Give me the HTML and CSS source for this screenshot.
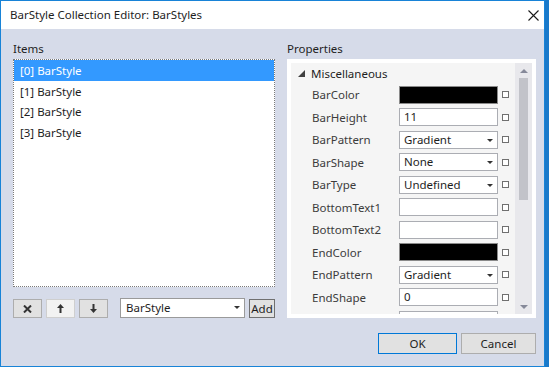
FILE: index.html
```html
<!DOCTYPE html>
<html>
<head>
    <title>BarStyle Collection Editor</title>
    <link rel="stylesheet" href="styles.css">
</head>
<body>

<div class="window">
    <div class="titlebar">
        <span class="title">BarStyle Collection Editor: BarStyles</span>
        <svg class="close" width="11" height="11" viewBox="0 0 11 11">
            <path d="M0.5 0.5 L10.5 10.5 M10.5 0.5 L0.5 10.5" stroke="#1a1a1a" stroke-width="1.1" fill="none"/>
        </svg>
    </div>

    <div class="content">
        <div class="panes">
            <div class="left">
                <div class="label">Items</div>
                <div class="listbox">
                    <div class="item selected">[0] BarStyle</div>
                    <div class="item">[1] BarStyle</div>
                    <div class="item">[2] BarStyle</div>
                    <div class="item">[3] BarStyle</div>
                </div>
                <div class="toolbar">
                    <button class="tool">
                        <svg width="9" height="8" viewBox="0 0 9 8"><path d="M1 0.5 L8 7.5 M8 0.5 L1 7.5" stroke="#333" stroke-width="2"/></svg>
                    </button>
                    <button class="tool light">
                        <svg width="7" height="9" viewBox="0 0 7 9"><path d="M3.5 0 L7 4 L4.5 4 L4.5 9 L2.5 9 L2.5 4 L0 4 Z" fill="#333"/></svg>
                    </button>
                    <button class="tool">
                        <svg width="7" height="9" viewBox="0 0 7 9"><path d="M3.5 9 L7 5 L4.5 5 L4.5 0 L2.5 0 L2.5 5 L0 5 Z" fill="#333"/></svg>
                    </button>
                    <div class="combo">BarStyle<span class="arrow"></span></div>
                    <button class="add">Add</button>
                </div>
            </div>

            <div class="right">
                <div class="label">Properties</div>
                <div class="propframe">
                    <div class="propgrid">
                        <div class="category">
                            <svg width="7" height="7" viewBox="0 0 7 7"><path d="M7 0 L7 7 L0 7 Z" fill="#404040"/></svg>
                            <span>Miscellaneous</span>
                        </div>
                        <div class="prop"><span class="name">BarColor</span><span class="value swatch"></span><span class="check"></span></div>
                        <div class="prop"><span class="name">BarHeight</span><span class="value">11</span><span class="check"></span></div>
                        <div class="prop"><span class="name">BarPattern</span><span class="value drop">Gradient<span class="arrow"></span></span><span class="check"></span></div>
                        <div class="prop"><span class="name">BarShape</span><span class="value drop">None<span class="arrow"></span></span><span class="check"></span></div>
                        <div class="prop"><span class="name">BarType</span><span class="value drop">Undefined<span class="arrow"></span></span><span class="check"></span></div>
                        <div class="prop"><span class="name">BottomText1</span><span class="value"></span><span class="check"></span></div>
                        <div class="prop"><span class="name">BottomText2</span><span class="value"></span><span class="check"></span></div>
                        <div class="prop"><span class="name">EndColor</span><span class="value swatch"></span><span class="check"></span></div>
                        <div class="prop"><span class="name">EndPattern</span><span class="value drop">Gradient<span class="arrow"></span></span><span class="check"></span></div>
                        <div class="prop"><span class="name">EndShape</span><span class="value">0</span><span class="check"></span></div>
                        <div class="prop"><span class="name"></span><span class="value"></span><span class="check"></span></div>
                    </div>
                    <div class="scrollbar">
                        <span class="up"></span>
                        <div class="track"><div class="thumb"></div></div>
                        <span class="down"></span>
                    </div>
                </div>
            </div>
        </div>

        <div class="footer">
            <button class="btn default">OK</button>
            <button class="btn">Cancel</button>
        </div>
    </div>
</div>

</body>
</html>
```

FILE: styles.css
```css
* {
    box-sizing: border-box;
}
html, body {
    margin: 0;
    padding: 0;
}
body {
    width: 549px;
    height: 367px;
    overflow: hidden;
    background-color: #1979ca;
    font-family: "Segoe UI", "Noto Sans", sans-serif;
    font-size: 11.5px;
    color: #1e1e1e;
}
.window {
    width: 545px;
    height: 367px;
    border: 1px solid #1883d7;
    background-color: #d6dbe9;
    display: flex;
    flex-direction: column;
}
.titlebar {
    height: 28px;
    background-color: white;
    display: flex;
    align-items: center;
    justify-content: space-between;
    padding: 0 5px 0 9px;
    line-height: 28px;
    flex-shrink: 0;
}
.close {
    margin-top: 1px;
}
.content {
    flex: 1;
    padding: 11px 8px 0 12px;
    display: flex;
    flex-direction: column;
}
.panes {
    display: flex;
    gap: 12px;
}
.left {
    width: 262px;
    display: flex;
    flex-direction: column;
}
.right {
    width: 249px;
    display: flex;
    flex-direction: column;
}
.label {
    height: 16px;
    line-height: 17px;
    margin-bottom: 3px;
}
.listbox {
    height: 228px;
    background-color: white;
    border: 1px dotted #7a7a7a;
}
.item {
    height: 20.7px;
    line-height: 21px;
    padding-left: 6px;
}
.item.selected {
    background-color: #3399ff;
    color: white;
}
.toolbar {
    margin-top: 11px;
    height: 20px;
    display: flex;
    align-items: flex-start;
}
button {
    font-family: inherit;
    font-size: 11.5px;
    color: #1e1e1e;
    padding: 0;
    cursor: pointer;
}
.tool {
    width: 29px;
    height: 19px;
    margin-top: 1px;
    margin-right: 4px;
    background-color: #e1e1e1;
    border: 1px solid #adadad;
    display: flex;
    align-items: center;
    justify-content: center;
}
.tool.light {
    background-color: #f2f2f2;
    border-color: #cfcfcf;
}
.combo {
    position: relative;
    margin-left: 8px;
    width: 125px;
    height: 20px;
    line-height: 18px;
    padding-left: 5px;
    background-color: white;
    border: 1px solid #9a9a9a;
}
.arrow {
    position: absolute;
    right: 4px;
    top: 7px;
    border-left: 3px solid transparent;
    border-right: 3px solid transparent;
    border-top: 3px solid #333;
}
.add {
    margin-left: 4px;
    margin-top: 1px;
    width: 26px;
    height: 19px;
    line-height: 16px;
    background-color: #e1e1e1;
    border: 1px solid #707070;
}
.propframe {
    height: 259px;
    background-color: white;
    padding: 4px;
    display: flex;
}
.propgrid {
    flex: 1;
    background-color: #f5f5f5;
    overflow: hidden;
}
.category {
    height: 20.5px;
    display: flex;
    align-items: center;
    padding-left: 7px;
    padding-top: 1px;
    color: #1e1e1e;
}
.category span {
    margin-left: 6px;
}
.prop {
    height: 22.5px;
    display: flex;
    align-items: center;
    padding-left: 21px;
}
.name {
    width: 87px;
    color: #3c3c3c;
}
.value {
    position: relative;
    width: 99px;
    height: 18px;
    line-height: 16px;
    padding-left: 4px;
    background-color: white;
    border: 1px solid #abadb3;
}
.value.swatch {
    background-color: black;
    border-color: #8a8a8a;
}
.value .arrow {
    top: 7px;
}
.check {
    width: 7px;
    height: 7px;
    margin-left: 4px;
    border: 1px solid #707070;
    background-color: white;
}
.scrollbar {
    width: 17px;
    background-color: #e8e8ec;
    display: flex;
    flex-direction: column;
    align-items: center;
}
.up, .down {
    height: 15px;
    display: flex;
    align-items: center;
    justify-content: center;
}
.up::before {
    content: "";
    border-left: 4px solid transparent;
    border-right: 4px solid transparent;
    border-bottom: 4px solid #868999;
}
.down::before {
    content: "";
    border-left: 4px solid transparent;
    border-right: 4px solid transparent;
    border-top: 4px solid #868999;
}
.track {
    flex: 1;
    width: 9px;
}
.thumb {
    width: 9px;
    height: 122px;
    background-color: #c2c3c9;
}
.footer {
    margin-top: 15px;
    display: flex;
    justify-content: flex-end;
    gap: 4px;
}
.btn {
    width: 75px;
    height: 21px;
    background-color: #e1e1e1;
    border: 1px solid #adadad;
}
.btn.default {
    width: 79px;
    border-color: #0078d7;
}
```
